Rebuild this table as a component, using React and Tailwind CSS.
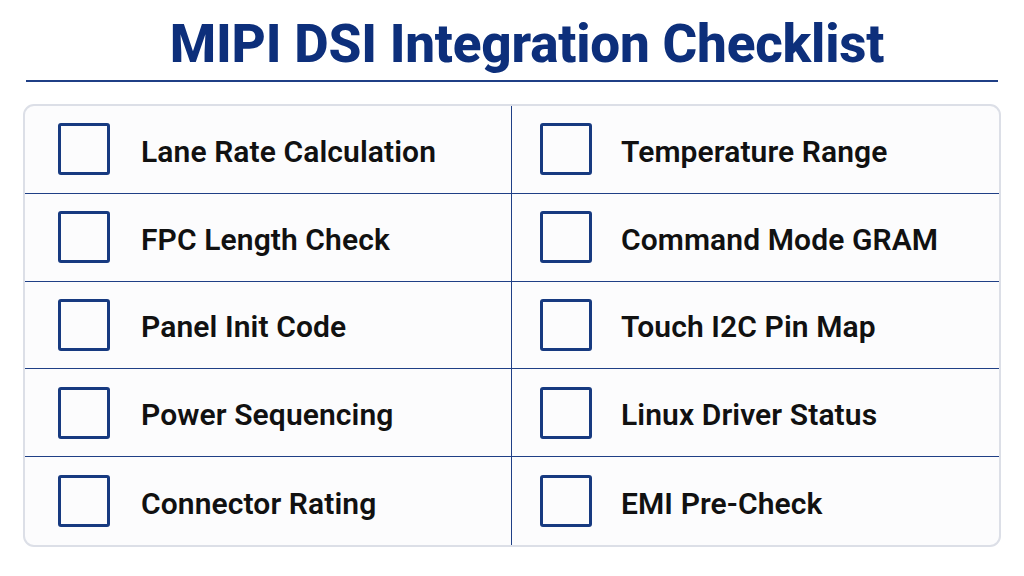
import React from "react";

const left = ["Lane Rate Calculation", "FPC Length Check", "Panel Init Code", "Power Sequencing", "Connector Rating"];
const right = ["Temperature Range", "Command Mode GRAM", "Touch I2C Pin Map", "Linux Driver Status", "EMI Pre-Check"];

function Cell({ label, side }) {
  return (
    <div className={`flex items-center h-full ${side === "l" ? "pl-[33px] border-r border-[#1f3f86]" : "pl-[28px]"}`}>
      <div className="w-[52px] h-[52px] border-[3px] border-[#173a80] rounded-[3px] shrink-0" />
      <span className={`${side === "l" ? "ml-[31px]" : "ml-[29px]"} pt-[4px] text-[30px] font-semibold text-[#111] tracking-[0.1px]`}>{label}</span>
    </div>
  );
}

export default function App() {
  return (
    <div className="w-[1024px] h-[576px] bg-white flex flex-col items-center" style={{ fontFamily: "Roboto, 'Liberation Sans', sans-serif" }}>
      <h1 className="mt-[12px] pl-[30px] text-[53px] leading-[64px] font-extrabold text-[#0d2f7b] tracking-[-0.2px]">MIPI DSI Integration Checklist</h1>
      <div className="mt-[4px] w-[972px] h-[2px] bg-[#1f3f86]" />
      <div className="mt-[22px] w-[978px] h-[443px] border-2 border-[#dcdfe7] rounded-[11px] bg-[#fcfcfd] overflow-hidden grid grid-cols-2 grid-rows-5">
        {left.map((l, i) => (
          <React.Fragment key={i}>
            <div className={`${i < 4 ? "border-b border-[#1f3f86]" : ""}`}>
              <Cell label={l} side="l" />
            </div>
            <div className={`${i < 4 ? "border-b border-[#1f3f86]" : ""}`}>
              <Cell label={right[i]} side="r" />
            </div>
          </React.Fragment>
        ))}
      </div>
    </div>
  );
}
